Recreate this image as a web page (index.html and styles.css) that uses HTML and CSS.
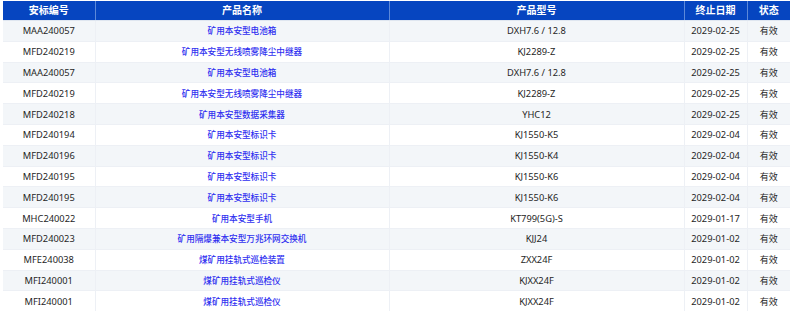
FILE: index.html
```html
<!DOCTYPE html>
<html lang="zh-CN">
<head>
<meta charset="utf-8">
<title>安标列表</title>
<link rel="stylesheet" href="styles.css">
</head>
<body>
<table class="grid">
  <colgroup>
    <col class="c-no"><col class="c-name"><col class="c-model"><col class="c-date"><col class="c-state">
  </colgroup>
  <thead>
    <tr><th>安标编号</th><th>产品名称</th><th>产品型号</th><th>终止日期</th><th>状态</th></tr>
  </thead>
  <tbody>
    <tr><td>MAA240057</td><td class="name">矿用本安型电池箱</td><td>DXH7.6 / 12.8</td><td>2029-02-25</td><td class="st">有效</td></tr>
    <tr><td>MFD240219</td><td class="name">矿用本安型无线喷雾降尘中继器</td><td>KJ2289-Z</td><td>2029-02-25</td><td class="st">有效</td></tr>
    <tr><td>MAA240057</td><td class="name">矿用本安型电池箱</td><td>DXH7.6 / 12.8</td><td>2029-02-25</td><td class="st">有效</td></tr>
    <tr><td>MFD240219</td><td class="name">矿用本安型无线喷雾降尘中继器</td><td>KJ2289-Z</td><td>2029-02-25</td><td class="st">有效</td></tr>
    <tr><td>MFD240218</td><td class="name">矿用本安型数据采集器</td><td>YHC12</td><td>2029-02-25</td><td class="st">有效</td></tr>
    <tr><td>MFD240194</td><td class="name">矿用本安型标识卡</td><td>KJ1550-K5</td><td>2029-02-04</td><td class="st">有效</td></tr>
    <tr><td>MFD240196</td><td class="name">矿用本安型标识卡</td><td>KJ1550-K4</td><td>2029-02-04</td><td class="st">有效</td></tr>
    <tr><td>MFD240195</td><td class="name">矿用本安型标识卡</td><td>KJ1550-K6</td><td>2029-02-04</td><td class="st">有效</td></tr>
    <tr><td>MFD240195</td><td class="name">矿用本安型标识卡</td><td>KJ1550-K6</td><td>2029-02-04</td><td class="st">有效</td></tr>
    <tr><td>MHC240022</td><td class="name">矿用本安型手机</td><td>KT799(5G)-S</td><td>2029-01-17</td><td class="st">有效</td></tr>
    <tr><td>MFD240023</td><td class="name">矿用隔爆兼本安型万兆环网交换机</td><td>KJJ24</td><td>2029-01-02</td><td class="st">有效</td></tr>
    <tr><td>MFE240038</td><td class="name">煤矿用挂轨式巡检装置</td><td>ZXX24F</td><td>2029-01-02</td><td class="st">有效</td></tr>
    <tr><td>MFI240001</td><td class="name">煤矿用挂轨式巡检仪</td><td>KJXX24F</td><td>2029-01-02</td><td class="st">有效</td></tr>
    <tr><td>MFI240001</td><td class="name">煤矿用挂轨式巡检仪</td><td>KJXX24F</td><td>2029-01-02</td><td class="st">有效</td></tr>
  </tbody>
</table>
</body>
</html>
```

FILE: styles.css
```css
html, body {
  margin: 0;
  padding: 0;
  background: #ffffff;
}
body {
  padding: 1px 0 0 3px;
  font-family: "Noto Sans", "Noto Sans CJK SC", sans-serif;
  color: #262626;
}
.grid {
  width: 787px;
  border-collapse: collapse;
  table-layout: fixed;
}
.c-no { width: 92px; }
.c-name { width: 294px; }
.c-model { width: 295px; }
.c-date { width: 63px; }
.c-state { width: 43px; }

.grid th {
  height: 19px;
  padding: 0;
  background: #0645c0;
  color: #ffffff;
  font-size: 10px;
  font-weight: 700;
  text-align: center;
  border-left: 1px solid #5d89d9;
  border-bottom: 1px solid #dfe6f0;
  line-height: 19px;
}
.grid th:first-child { border-left: none; }

.grid td {
  height: 19.8px;
  padding: 0;
  font-size: 9.3px;
  text-align: center;
  border-left: 1px solid #edf0f5;
  border-bottom: 1px solid #edf0f5;
  white-space: nowrap;
  overflow: hidden;
}
.grid td:first-child { border-left: none; }
.grid tbody tr:nth-child(odd) td { background: #f3f6f9; }
.grid tbody tr:nth-child(even) td { background: #ffffff; }

.grid td.name {
  color: #3030f0;
  font-size: 8.6px;
  font-weight: 500;
}
.grid td.st {
  font-size: 9px;
}
```
